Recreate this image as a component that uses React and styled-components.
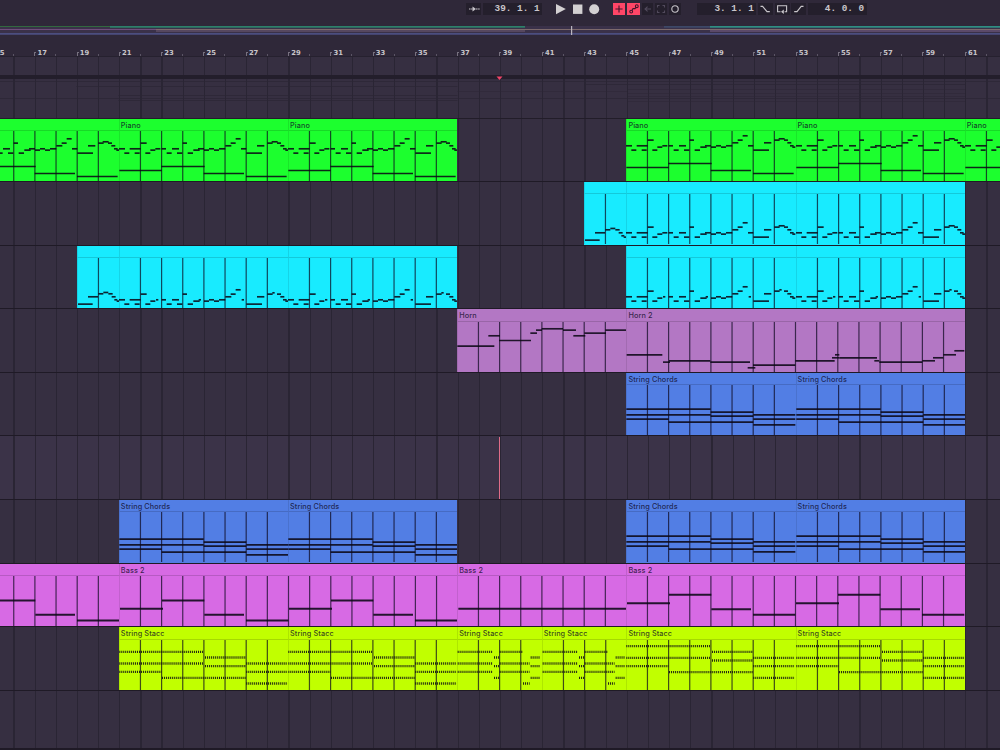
import React from 'react'
import styled, { createGlobalStyle } from 'styled-components';

// one bar of the arrangement in px, the first bar and where it starts
const BAR = 21.15;
const FIRST_BAR = 13;
const LAST_BAR = 63;
const START = -50.38;
// clip drawings use 3 units per px
const UNIT = BAR * 3;

const GlobalStyle = createGlobalStyle`
  body {
    margin: 0;
    background: #2f2839;
    overflow: hidden;
  }
`;

const Window = styled.div`
  width: 1000px;
  height: 750px;
  display: flex;
  flex-direction: column;
  overflow: hidden;
  background: #2f2839;
  font-family: Inter, "Liberation Sans", sans-serif;
`;

const Toolbar = styled.div`
  height: 23px;
  flex: none;
  box-sizing: border-box;
  padding: 3px 0 8px 466px;
  display: flex;
`;

const Group = styled.div`
  display: flex;
  gap: ${p => p.$gap || 1}px;
  margin-right: ${p => p.$after || 0}px;
`;

const Box = styled.div`
  width: ${p => p.$w}px;
  height: 12px;
  display: flex;
  align-items: center;
  justify-content: center;
  background: ${p => p.$on ? '#ff4667' : '#241f2c'};
  color: ${p => p.$on ? '#43142b' : p.$dim ? '#514a5c' : '#c9c6cb'};
`;

const Position = styled(Box)`
  box-sizing: border-box;
  padding-right: 2.4px;
  justify-content: flex-end;
  white-space: pre;
  font: bold 9.4px/12px "Liberation Mono", monospace;
`;

const Transport = styled.svg`
  width: 46px;
  height: 12px;
  fill: #d3d0d2;
`;

const Icon = styled.svg`
  width: 12px;
  height: 12px;
  flex: none;
  fill: none;
  stroke: currentColor;
  stroke-width: 1.1;
`;

const Overview = styled.svg`
  display: block;
  flex: none;
  width: 1000px;
  height: 15px;
`;

const Timeline = styled.div`
  width: ${(LAST_BAR - FIRST_BAR) * BAR}px;
  margin-left: ${START}px;
  flex: none;
`;

const Ruler = styled.div`
  height: 18px;
  display: flex;
  border-bottom: 1px solid #26212f;
  box-sizing: content-box;
`;

const Mark = styled.div`
  width: ${BAR * 2}px;
  flex: none;
  box-sizing: border-box;
  padding: 10.6px 0 0 3.2px;
  color: #c8c5ca;
  font: bold 6.8px/9px "DejaVu Sans", sans-serif;
  background:
    linear-gradient(#77717f, #77717f) 0 14px / 1px 4px no-repeat,
    linear-gradient(#77717f, #77717f) 0 14px / 2px 1px no-repeat,
    linear-gradient(#5b5565, #5b5565) 21px 16px / 1px 2px no-repeat;
`;

const GridArea = styled.div`
  background-color: #362f41;
  background-image: repeating-linear-gradient(to right, #2a2534 0 1.2px, transparent 1.2px ${BAR}px);
`;

const ScrubArea = styled(GridArea)`
  height: 18px;
`;

const Locators = styled.div`
  height: 4px;
  background: #231e2b;
`;

const Folded = styled(GridArea)`
  height: 39.5px;
  border-bottom: 1.2px solid #221d29;
  box-sizing: border-box;
`;

const FoldedLines = styled.svg`
  display: block;
  width: 1058px;
  height: 37px;
`;

const Lane = styled(GridArea)`
  box-sizing: border-box;
  height: ${p => p.$last ? 59 : 63.6}px;
  border-bottom: ${p => p.$last ? 2 : 1}px solid #1f1a26;
  display: flex;
  background-color: ${p => p.$selected ? '#3b3348' : '#362f41'};
`;

const ClipBox = styled.div`
  width: ${p => p.$bars * BAR}px;
  margin-left: ${p => p.$gap * BAR}px;
  flex: none;
  background: ${p => p.$color};
  display: flex;
  flex-direction: column;
`;

const ClipTitle = styled.div`
  height: 12.4px;
  flex: none;
  box-sizing: border-box;
  padding-left: 1px;
  border-bottom: 1px solid rgba(0, 0, 0, 0.14);
  border-left: 1px solid rgba(0, 0, 0, 0.1);
  color: rgba(16, 10, 40, 0.78);
  font-size: 7.3px;
  font-weight: 500;
  line-height: 13.2px;
  letter-spacing: 0.1px;
  white-space: nowrap;
`;

const Notes = styled.svg`
  display: block;
  flex: none;
  width: ${p => p.$bars * BAR}px;
  height: 50px;
`;

const Playhead = styled.div`
  position: absolute;
  left: 499px;
  top: 437px;
  width: 1px;
  height: 62px;
  background: #e06c88;
`;

const InsertMarker = styled.svg`
  position: absolute;
  left: 496px;
  top: 76px;
  width: 7px;
  height: 4px;
  fill: #f04468;
`;

// notes are [start, end, y]
const shift = (notes, dy) => notes.map(([a, b, y]) => [a, b, y + dy]);

const melody = [
  [0, 18, 0], [16, 31, 13], [32, 65, 0], [47, 62, 13], [65, 83, -17], [79, 94, 13],
  [94, 109, 4], [109, 124, 0], [128, 141, 0], [143, 158, 13], [159, 180, 0], [174, 190, 13],
  [191, 204, -17], [206, 222, 13], [223, 242, 4], [237, 255, 0], [255, 270, 4], [270, 285, 0],
  [285, 300, 4], [300, 319, 0], [319, 337, -9], [335, 350, -17], [350, 365, -30], [366, 382, 0],
  [382, 429, 13], [414, 436, -9], [445, 461, -17], [458, 476, -21], [474, 486, -17],
  [484, 496, -9], [492, 503, 0], [499, 508, 4],
];
const pianoBass = [[1, 128, 65], [127, 257, 53], [254, 375, 74], [381, 503, 83]];
const piano = dy => shift([...melody, ...pianoBass], dy);
const pickup = [
  [3, 47, 13], [33, 63, -9], [64, 79, -18], [79, 94, -22], [94, 107, -18], [104, 116, -9],
  [112, 121, 0], [119, 127, 4],
];
// same line, but some of the notes are cut short
const shortMelody = melody.map(([a, b, y], i) => [7, 15, 23, 27].includes(i) ? [a + 2, a + 9, y] : [a, b, y]);

const horn = [
  [1, 112, 73], [94, 129, 42], [126, 222, 56], [220, 240, 34], [237, 255, 25], [254, 318, 21],
  [318, 357, 25], [349, 385, 42], [382, 447, 34], [445, 507, 25],
];
const horn2 = [
  [2, 109, 99], [111, 132, 121], [129, 253, 117], [253, 372, 121], [365, 388, 138], [381, 508, 130],
  [508, 626, 117], [618, 640, 108], [627, 640, 99], [640, 753, 108], [745, 760, 117],
  [760, 889, 121], [889, 927, 117], [921, 952, 108], [952, 990, 99], [985, 1015, 87],
];

const chords = dy => shift([
  [1, 254, 73], [1, 254, 90], [1, 128, 103], [128, 382, 112], [254, 382, 82], [254, 382, 94],
  [382, 508, 90], [382, 508, 103], [382, 508, 120],
], dy);

const bass = [[3, 132, 99], [129, 256, 74], [256, 375, 117], [381, 508, 134]];
const bassTwice = dy => shift([...bass, ...bass.map(([a, b, y]) => [a + 507, b + 507, y])], dy);

const stacc = dy => shift([
  [1, 254, 36], [1, 254, 71], [1, 127, 96], [129, 380, 114], [258, 380, 53], [258, 380, 79],
  [382, 506, 71], [382, 506, 96], [382, 506, 131],
], dy);
const staccFill = [
  [2, 108, 36], [2, 108, 71], [2, 108, 96], [111, 126, 53], [111, 126, 79], [111, 126, 114],
  [128, 196, 36], [128, 218, 71], [128, 218, 96], [198, 218, 131],
  [221, 250, 53], [221, 250, 79], [221, 250, 114],
];

const green = '#1cff2e';
const cyan = '#18ebff';
const violet = '#b377c4';
const blue = '#527ee4';
const pink = '#d76ae4';
const lime = '#c1ff00';

const lanes = [
  { color: green, clips: [
    { from: 13, to: 21, notes: piano(54) },
    { from: 21, to: 29, name: 'Piano', notes: piano(54) },
    { from: 29, to: 37, name: 'Piano', notes: piano(54) },
    { from: 45, to: 53, name: 'Piano', notes: piano(45) },
    { from: 53, to: 61, name: 'Piano', notes: piano(45) },
    { from: 61, to: 63, name: 'Piano', notes: piano(45).filter(n => n[0] < 110) },
  ] },
  { color: cyan, clips: [
    { from: 43, to: 45, notes: shift(pickup, 126) },
    { from: 45, to: 53, notes: shift(melody, 117) },
    { from: 53, to: 61, notes: shift(melody, 117) },
  ] },
  { color: cyan, clips: [
    { from: 19, to: 21, notes: shift(pickup, 126) },
    { from: 21, to: 29, notes: shift(shortMelody, 126) },
    { from: 29, to: 37, notes: shift(shortMelody, 126) },
    { from: 45, to: 53, notes: shift(shortMelody, 117) },
    { from: 53, to: 61, notes: shift(shortMelody, 117) },
  ] },
  { color: violet, clips: [
    { from: 37, to: 45, name: 'Horn', notes: horn },
    { from: 45, to: 61, name: 'Horn 2', notes: horn2 },
  ] },
  { color: blue, clips: [
    { from: 45, to: 53, name: 'String Chords', notes: chords(0) },
    { from: 53, to: 61, name: 'String Chords', notes: chords(0) },
  ] },
  { selected: true, clips: [] },
  { color: blue, clips: [
    { from: 21, to: 29, name: 'String Chords', notes: chords(9) },
    { from: 29, to: 37, name: 'String Chords', notes: chords(9) },
    { from: 45, to: 53, name: 'String Chords', notes: chords(0) },
    { from: 53, to: 61, name: 'String Chords', notes: chords(0) },
  ] },
  { color: pink, weight: 6, clips: [
    { from: 13, to: 21, notes: bass },
    { from: 21, to: 37, name: 'Bass 2', notes: bassTwice(0) },
    { from: 37, to: 45, name: 'Bass 2', notes: [[4, 507, 99]] },
    { from: 45, to: 61, name: 'Bass 2', notes: bassTwice(-17) },
  ] },
  { color: lime, weight: 7, dash: '3 2.9', clips: [
    { from: 21, to: 29, name: 'String Stacc', notes: stacc(0) },
    { from: 29, to: 37, name: 'String Stacc', notes: stacc(0) },
    { from: 37, to: 41, name: 'String Stacc', notes: staccFill },
    { from: 41, to: 45, name: 'String Stacc', notes: staccFill },
    { from: 45, to: 53, name: 'String Stacc', notes: stacc(-17) },
    { from: 53, to: 61, name: 'String Stacc', notes: stacc(-17) },
  ] },
  { last: true, clips: [] },
];

const Clip = ({ clip, gap, color, weight = 5, dash }) => {
  const bars = clip.to - clip.from;
  const lines = Array.from({ length: bars - 1 }, (_, i) => (i + 1) * UNIT);
  return (
    <ClipBox $bars={bars} $gap={gap} $color={color}>
      <ClipTitle>{clip.name}</ClipTitle>
      <Notes $bars={bars} viewBox={`0 0 ${bars * UNIT} 150`} preserveAspectRatio="none">
        <path d="M1 0V150" stroke="rgba(0,0,0,0.12)" strokeWidth="3" />
        {lines.map(x => (
          <path key={x} d={`M${x + 0.9} 0V150`} stroke="rgba(12,8,30,0.72)" strokeWidth="3.6" />
        ))}
        {clip.notes.map(([a, b, y], i) => (
          <path key={i} d={`M${a} ${y - 0.6}H${b}`} stroke="#0b0816" strokeOpacity="0.88" strokeWidth={weight} strokeDasharray={dash} />
        ))}
      </Notes>
    </ClipBox>
  )
}

const marks = [];
for (let bar = FIRST_BAR; bar < LAST_BAR; bar += 2) marks.push(bar);

const App = () => {
  return (
    <Window>
      <GlobalStyle />
      <Toolbar>
        <Group $gap={2} $after={13}>
          <Box $w={15}>
            <Icon viewBox="0 0 12 12"><path d="M1 6H4.5M8 6H12" strokeDasharray="1.6 0.5" /><path d="M4.5 3.4L8 6L4.5 8.6Z" fill="currentColor" stroke="none" /></Icon>
          </Box>
          <Position $w={59}>39. 1. 1</Position>
        </Group>
        <Group $after={12}>
          <Transport viewBox="0 0 46 12">
            <path d="M1 1V11.2L10.8 6.1Z" />
            <rect x="18" y="1.5" width="9.4" height="9.4" />
            <circle cx="39.2" cy="6.2" r="5" />
          </Transport>
        </Group>
        <Group $gap={2} $after={16}>
          <Box $w={12.3} $on>
            <Icon viewBox="0 0 12 12"><path d="M6 2.4V9.6M2.4 6H9.6" /></Icon>
          </Box>
          <Box $w={12.7} $on>
            <Icon viewBox="0 0 12 12"><circle cx="3.2" cy="8.6" r="1.4" /><circle cx="8.8" cy="3.2" r="1.4" /><path d="M4 7.4L5 5.6H7L8 4.4" /></Icon>
          </Box>
          <Box $w={11.5} $dim>
            <Icon viewBox="0 0 12 12"><path d="M3 6H9M5.6 3.6L3 6L5.6 8.4" /></Icon>
          </Box>
          <Box $w={11.5} $dim>
            <Icon viewBox="0 0 12 12"><path d="M2.5 4.5V2.5H4.5M7.5 2.5H9.5V4.5M9.5 7.5V9.5H7.5M4.5 9.5H2.5V7.5" /></Icon>
          </Box>
          <Box $w={11.7}>
            <Icon viewBox="0 0 12 12"><circle cx="6" cy="6" r="3.2" /></Icon>
          </Box>
        </Group>
        <Group $gap={1.7}>
          <Position $w={59.5}>3. 1. 1</Position>
          <Box $w={15}>
            <Icon viewBox="0 0 12 12"><path d="M1.5 3.4H3.6L8 8.6H10.8" /></Icon>
          </Box>
          <Box $w={15}>
            <Icon viewBox="0 0 12 12"><path d="M4.5 8.7H1.6V2.8H10.6V8.7H8.6" /><path d="M5 8.8L7.8 6.6V11Z" fill="currentColor" stroke="none" /></Icon>
          </Box>
          <Box $w={15}>
            <Icon viewBox="0 0 12 12"><path d="M1.2 8.6H4L8.2 3.4H10.5" /></Icon>
          </Box>
          <Position $w={58.7}>4. 0. 0</Position>
        </Group>
      </Toolbar>
      <Overview viewBox="0 23 1000 15">
        <rect y="26" width="1000" height="9" fill="#3a3149" />
        <rect y="26" width="110" height="1" fill="#32683f" />
        <rect x="110" y="26" width="415" height="1.7" fill="#2d806a" />
        <rect x="664" y="26.3" width="46" height="1.2" fill="#3f5376" />
        <rect x="710" y="26" width="290" height="1.7" fill="#2f8e83" />
        <rect y="29" width="156" height="1" fill="#714d7d" />
        <rect x="156" y="29" width="369" height="3" fill="#56475f" />
        <rect x="710" y="29" width="290" height="3" fill="#5b4969" />
        <rect x="156" y="29" width="844" height="1" fill="#7d6a6c" />
        <rect y="33" width="1000" height="1.7" fill="#4b4e80" />
        <rect x="571" y="26" width="1.2" height="9" fill="#b9b5be" />
      </Overview>
      <Timeline>
        <Ruler>
          {marks.map(bar => <Mark key={bar}>{bar > FIRST_BAR && bar}</Mark>)}
        </Ruler>
        <ScrubArea />
        <Locators />
        <Folded>
          <FoldedLines viewBox="-50.45 79 1058 37" stroke="#2b2535" strokeWidth="1">
            <path d="M-50 81.5H1008M76 86.5H457M584 84.5H965M118 95.5H457M-50 98.5H1008M118 100.5H457" strokeOpacity="0.7" />
            <path d="M627 89.5H965M627 93.5H965M627 96.5H965M627 101.5H965M457 91.5H627" strokeOpacity="0.5" />
          </FoldedLines>
        </Folded>
        {lanes.map((lane, i) => (
          <Lane key={i} $selected={lane.selected} $last={lane.last}>
            {lane.clips.map((clip, j) => (
              <Clip
                key={clip.from}
                clip={clip}
                gap={clip.from - (j ? lane.clips[j - 1].to : FIRST_BAR)}
                color={lane.color}
                weight={lane.weight}
                dash={lane.dash}
              />
            ))}
          </Lane>
        ))}
      </Timeline>
      <InsertMarker viewBox="0 0 7 4"><path d="M0.5 0.5H6.5L3.5 4Z" /></InsertMarker>
      <Playhead />
    </Window>
  )
}

export default App
